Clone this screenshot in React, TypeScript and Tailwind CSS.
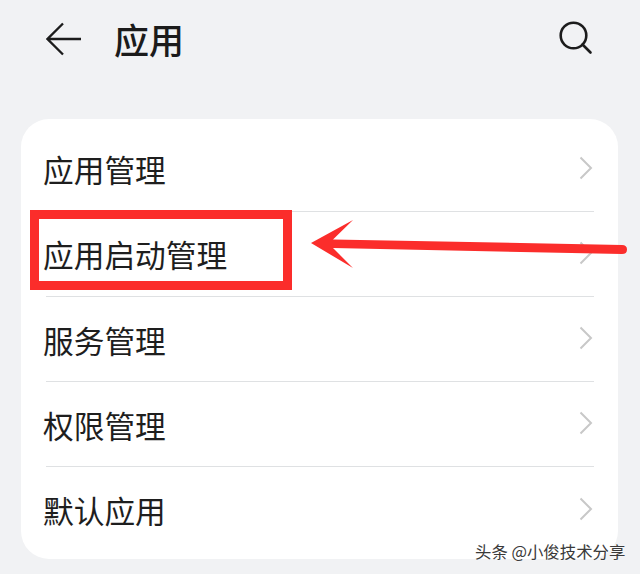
const rows = ["应用管理", "应用启动管理", "服务管理", "权限管理", "默认应用"];

function Chevron() {
  return (
    <svg width="14" height="24" viewBox="0 0 14 24" fill="none" className="shrink-0 -mt-[2px]">
      <path d="M1.500 1.500L12 12L1.500 22.500" stroke="#c8c8c8" strokeWidth="2" />
    </svg>
  );
}

export default function App() {
  return (
    <div className="relative w-[640px] h-[574px] overflow-hidden bg-[#f1f2f4] [font-family:'Noto_Sans_CJK_SC','Noto_Sans',sans-serif]">
      <header className="flex items-center h-[78px] pl-[46px] pr-[47px]">
        <svg width="36" height="34" viewBox="0 0 36 34" fill="none" className="shrink-0">
          <path d="M17 1.500L1.500 17L17 32.500M1.500 17H35" stroke="#1c1c1c" strokeWidth="2.300" />
        </svg>
        <h1 className="ml-[32px] -mt-[2px] text-[35px] leading-none font-medium text-[#1b1b1b]">应用</h1>
        <svg width="34" height="34" viewBox="0 0 34 34" fill="none" className="ml-auto shrink-0 -mt-[2px]">
          <circle cx="14.500" cy="14.500" r="12.800" stroke="#1c1c1c" strokeWidth="2.600" />
          <path d="M23.500 23.500L31.500 31.500" stroke="#1c1c1c" strokeWidth="2.600" strokeLinecap="round" />
        </svg>
      </header>

      <main className="ml-[21px] mt-[41px] w-[597px] h-[440px] rounded-[28px] bg-white pt-[7.500px] pl-[25px] pr-[24px]">
        {rows.map((r, i) => (
          <div
            key={r}
            className={
              i < rows.length - 1
                ? "flex items-center justify-between h-[85.200px] border-b border-[#dfe1e3] pr-[1px]"
                : "flex items-center justify-between h-[85.200px] pr-[1px]"
            }
          >
            <span className="-ml-[3px] mt-[2px] text-[30.700px] leading-none text-[#1e1e1e]">{r}</span>
            <Chevron />
          </div>
        ))}
      </main>

      <div className="absolute left-[30px] top-[210px] w-[262px] h-[80px] border-[9px] border-[#fb2d2b]" />

      <svg width="330" height="60" viewBox="0 0 330 60" className="absolute left-[310px] top-[218px]">
        <path
          d="M1 25L43 2L23 21.500L312 27Q317 27 317 31.500Q317 36 312 36L23 30L43 50Z"
          fill="#fb2d2b"
        />
      </svg>

      <div className="absolute left-[475px] top-[540px] text-[16.400px] leading-[22px] whitespace-nowrap text-[#3a3a3a] [text-shadow:0_0_2px_#fff]">
        头条 @小俊技术分享
      </div>
    </div>
  );
}
